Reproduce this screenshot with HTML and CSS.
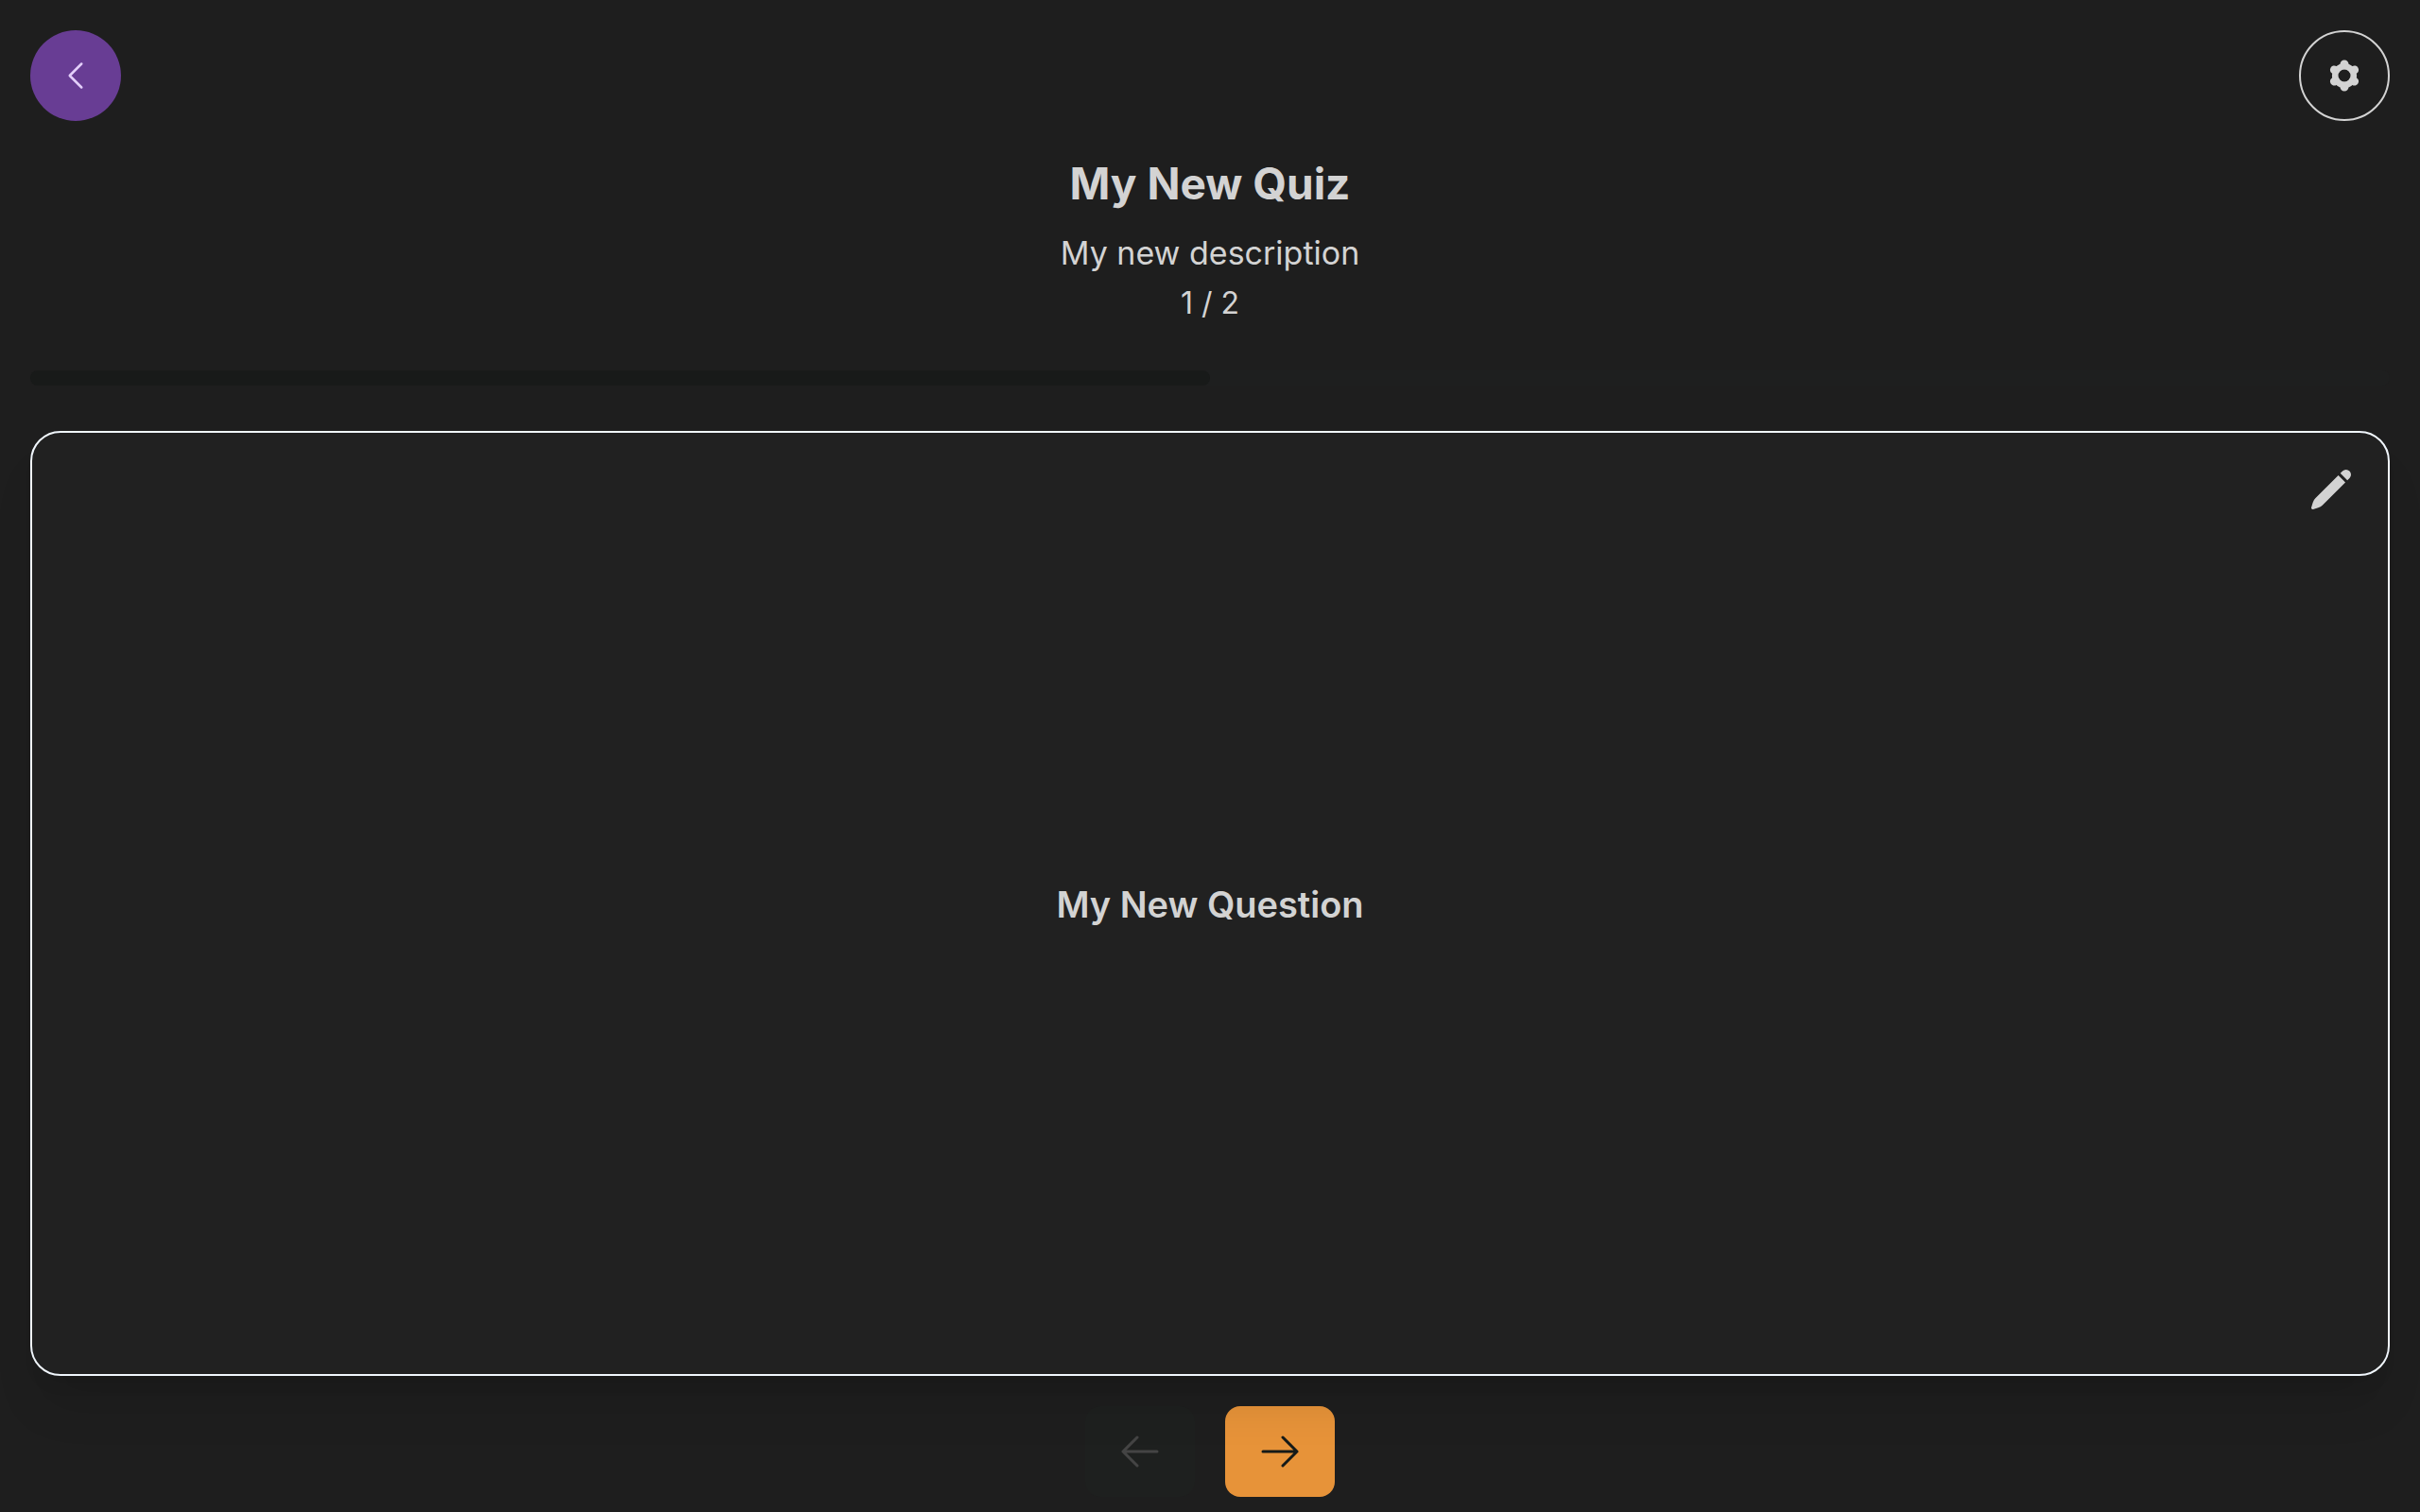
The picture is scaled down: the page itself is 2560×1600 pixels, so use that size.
FILE: index.html
```html
<!DOCTYPE html>
<html lang="en">
<head>
<meta charset="utf-8">
<meta name="viewport" content="width=device-width, initial-scale=1">
<title>My New Quiz</title>
<link rel="stylesheet" href="styles.css">
</head>
<body>
<header class="topbar">
  <button class="round round-back" type="button" aria-label="Back">
    <svg class="icon-back" viewBox="0 0 24 24" fill="none" stroke="currentColor" stroke-width="1.5" stroke-linecap="round" stroke-linejoin="round"><path d="M15.75 19.5L8.25 12l7.5-7.5"/></svg>
  </button>
  <button class="round round-settings" type="button" aria-label="Settings">
    <svg class="icon-gear" viewBox="-20 -20 40 40" fill="none" stroke="currentColor" stroke-linecap="round">
      <circle r="9.8" stroke-width="6.6"/>
      <path stroke-width="9" d="M0-11.2V-12M0 11.2V12M9.7-5.6L10.6-6.1M9.7 5.6L10.6 6.1M-9.7-5.6L-10.6-6.1M-9.7 5.6L-10.6 6.1"/>
    </svg>
  </button>
</header>
<main class="quiz">
  <div class="intro">
    <h1 class="title">My New Quiz</h1>
    <p class="description">My new description</p>
    <p class="count">1 / 2</p>
  </div>
  <div class="track" role="progressbar" aria-label="Quiz progress" aria-valuemin="0" aria-valuemax="2" aria-valuenow="1">
    <div class="fill" style="width: 50%"></div>
  </div>
  <section class="card">
    <button class="edit" type="button" aria-label="Edit question">
      <svg class="icon-lg" viewBox="0 0 24 24" fill="currentColor"><path d="M21.731 2.269a2.625 2.625 0 00-3.712 0l-1.157 1.157 3.712 3.712 1.157-1.157a2.625 2.625 0 000-3.712zM19.513 8.199l-3.712-3.712-12.15 12.15a5.25 5.25 0 00-1.32 2.214l-.8 2.685a.75.75 0 00.933.933l2.685-.8a5.25 5.25 0 002.214-1.32L19.513 8.2z"/></svg>
    </button>
    <h2 class="question">My New Question</h2>
  </section>
  <nav class="pager" aria-label="Questions">
    <button class="step" type="button" aria-label="Previous question" disabled>
      <svg class="icon-lg" viewBox="0 0 24 24" fill="none" stroke="currentColor" stroke-width="1.5" stroke-linecap="round" stroke-linejoin="round"><path d="M10.5 19.5L3 12m0 0l7.5-7.5M3 12h18"/></svg>
    </button>
    <button class="step step-next" type="button" aria-label="Next question">
      <svg class="icon-lg" viewBox="0 0 24 24" fill="none" stroke="currentColor" stroke-width="1.5" stroke-linecap="round" stroke-linejoin="round"><path d="M13.5 4.5L21 12m0 0l-7.5 7.5M21 12H3"/></svg>
    </button>
  </nav>
</main>
</body>
</html>
```
FILE: styles.css
```css
* {
  box-sizing: border-box;
}

body {
  display: flex;
  flex-direction: column;
  min-height: 100vh;
  margin: 0;
  padding: 32px 32px 16px;
  background: #1e1e1e;
  color: #d3d3d3;
  font-family: Inter, "Liberation Sans", sans-serif;
}

button {
  display: flex;
  align-items: center;
  justify-content: center;
  padding: 0;
  border: 0;
  background: none;
  color: inherit;
  cursor: pointer;
}

h1,
h2,
p {
  margin: 0;
}

.topbar {
  display: flex;
  justify-content: space-between;
}

.round {
  width: 96px;
  height: 96px;
  border-radius: 50%;
}

.round-back {
  background: #683d94;
  color: #e3cffa;
}

.round-settings {
  border: 2px solid #d3d3d3;
}

.icon-back,
.icon-gear {
  width: 40px;
  height: 40px;
}

.icon-lg {
  width: 48px;
  height: 48px;
}

.quiz {
  display: flex;
  flex: 1;
  flex-direction: column;
}

.intro {
  padding: 34px 0 46px;
  text-align: center;
}

.title {
  margin-bottom: 14px;
  font-size: 46px;
  line-height: 64px;
  font-weight: 700;
}

.description {
  font-size: 34px;
  line-height: 56px;
}

.count {
  font-size: 32px;
  line-height: 50px;
}

.track {
  height: 16px;
  margin-bottom: 48px;
  border-radius: 8px;
  background: #1e1f1f;
}

.fill {
  height: 100%;
  border-radius: 8px;
  background: #181a19;
}

.card {
  position: relative;
  display: flex;
  flex: 1;
  align-items: center;
  justify-content: center;
  padding: 98px 32px 96px;
  border: 2px solid #f0f6fc;
  border-radius: 32px;
  background: #212121;
  box-shadow: 0 40px 50px -10px rgba(0, 0, 0, 0.1), 0 16px 20px -12px rgba(0, 0, 0, 0.1);
}

.edit {
  position: absolute;
  top: 36px;
  right: 36px;
}

.question {
  font-size: 38px;
  line-height: 56px;
  font-weight: 600;
}

.pager {
  display: flex;
  justify-content: center;
  gap: 32px;
  padding-top: 32px;
}

.step {
  width: 116px;
  height: 96px;
  border-radius: 16px;
  background: #1e201f;
}

.step:disabled {
  color: #444444;
  cursor: default;
}

.step-next {
  background: #e79339;
  color: #151a18;
}
```
